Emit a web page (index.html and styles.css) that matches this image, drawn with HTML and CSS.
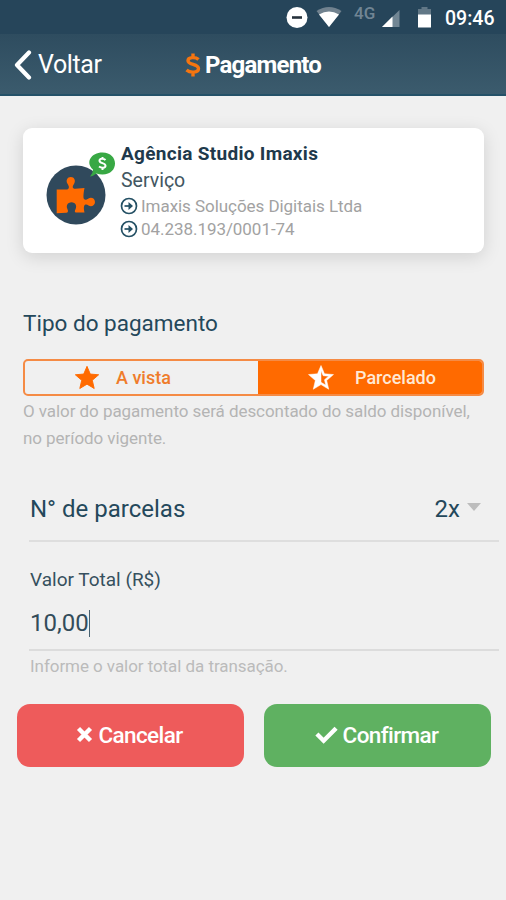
FILE: index.html
```html
<!DOCTYPE html>
<html lang="pt-BR">
<head>
<meta charset="utf-8">
<title>Pagamento</title>
<link rel="stylesheet" href="styles.css">
</head>
<body>
<header class="top">
  <div class="status">
    <svg class="status-icons" width="150" height="34" viewBox="0 0 150 34">
      <circle cx="12" cy="17.500" r="10.500" fill="#fff"/>
      <path d="M7 17.500h10" stroke="#26323c" stroke-width="2.600"/>
      <path d="M31.500 11Q44 3 56.500 11L44 27z" fill="#71828f"/>
      <path d="M34 14.500Q44 8.500 54 14.500L44 27z" fill="#fff"/>
      <path d="M114.500 10v17H97z" fill="#718694"/>
      <path d="M107.500 16.500V27H97z" fill="#fff"/>
      <path d="M133 9h3.500V7h6v2h3.500v6h-13z" fill="#617786"/>
      <path d="M133 14.500h13v13h-13z" fill="#fff"/>
    </svg>
    <span class="network">4G</span>
    <span class="clock">09:46</span>
  </div>
  <nav class="bar">
    <a class="back"><svg width="18" height="30" viewBox="0 0 18 30"><path d="M15 2.500L3 15l12 12.500" fill="none" stroke="#fff" stroke-width="4.200" stroke-linecap="round" stroke-linejoin="round"/></svg><span class="t-back">Voltar</span></a>
    <h1 class="title"><svg width="16" height="26" viewBox="0 0 16 26"><path d="M13.500 7.500C11 5 3 4.500 3 8.800c0 4.400 10.500 3 10.500 7.800 0 4.500-8.500 4.400-12 1.400M8 1.500v4M8 20v4.500" fill="none" stroke="#f57510" stroke-width="3.400"/></svg><span class="t-title">Pagamento</span></h1>
  </nav>
</header>
<main>
  <section class="card">
    <svg class="avatar" width="76" height="76" viewBox="0 0 76 76">
      <circle cx="32" cy="46" r="29.500" fill="#30495c"/>
      <path d="M12.700 40.500H22c4 0 3.200-3.500 1.500-5.800-2-3.200-.2-6.700 3.300-6.700s5.200 3.500 3.300 6.700c-1.700 2.300-2.200 5.100 1.200 5.100l9.200-.8c-.8 4-1.600 9.500-.5 11 1.200 1.500 3 .5 4.500-.5 2.600-1.700 6.500-.2 6.500 3.500s-3.900 5.300-6.500 3.500c-1.500-1.200-3.500-1.500-4.300.3-.7 1.600-.2 4.500.3 6.700h-8.500c-1.500 0-1.500-1.500-.4-3.500 1.500-3 0-6.700-4.100-6.700s-5.600 3.700-4.100 6.700c1 2 .8 3.700-1.200 3.800l-9.500.4z" fill="#ff6a00"/>
      <path d="M46 27.500q3-3 3-7c-8-7-2-17 9.500-17 16.500 0 17 22 0 22q-3.500 0-6-1-3 2.500-6.500 3z" fill="#38a844"/>
      <path d="M61.500 11c-2-2-6-1.500-6 .7 0 2.800 6 2 6 5 0 2.500-4 2.600-6.500.8M58.500 8v2M58.500 18.500V21" fill="none" stroke="#fff" stroke-width="2"/>
    </svg>
    <div class="info">
      <div class="name"><span>Agência Studio Imaxis</span></div>
      <div class="kind"><span>Serviço</span></div>
      <div class="detail"><svg width="18" height="18" viewBox="0 0 18 18"><circle cx="9" cy="9" r="7.500"/><path d="M4.500 9H10.500"/><path class="head" d="M8.500 5L13 9l-4.500 4z"/></svg><span class="t-company">Imaxis Soluções Digitais Ltda</span></div>
      <div class="detail"><svg width="18" height="18" viewBox="0 0 18 18"><circle cx="9" cy="9" r="7.500"/><path d="M4.500 9H10.500"/><path class="head" d="M8.500 5L13 9l-4.500 4z"/></svg><span class="t-doc">04.238.193/0001-74</span></div>
    </div>
  </section>

  <h2 class="section-title"><span>Tipo do pagamento</span></h2>
  <div class="segment">
    <button class="option cash"><svg width="28" height="28" viewBox="0 0 24 24"><path d="M12 17.270L18.180 21l-1.640-7.030L22 9.240l-7.190-.61L12 2 9.190 8.630 2 9.240l5.460 4.730L5.820 21z" fill="#ff6a00" stroke="#ff6a00" stroke-width=".8"/></svg><span>A vista</span></button>
    <button class="option parts"><svg width="30" height="30" viewBox="0 0 24 24"><path d="M22 9.240l-7.190-.62L12 2 9.190 8.630 2 9.240l5.460 4.730L5.820 21 12 17.270 18.180 21l-1.630-7.030zM12 15.400V6.100l1.710 4.040 4.380.38-3.320 2.880 1 4.280z" fill="#fff" stroke="#fff" stroke-width=".4"/></svg><span>Parcelado</span></button>
  </div>
  <p class="note"><span class="n1">O valor do pagamento será descontado do saldo disponível,</span><br><span class="n2">no período vigente.</span></p>

  <div class="row"><span class="t-label">N° de parcelas</span><span class="value"><span class="t-2x">2x</span><i class="caret"></i></span></div>
  <label class="field">
    <span class="field-label"><span>Valor Total (R$)</span></span>
    <span class="input"><span>10,00</span><i class="cursor"></i></span>
  </label>
  <p class="hint"><span>Informe o valor total da transação.</span></p>

  <div class="actions">
    <button class="btn cancel"><svg width="17" height="17" viewBox="0 0 17 17"><path d="M2.500 2.500l12 12M14.500 2.500l-12 12" stroke="#fff" stroke-width="4.400"/></svg><span>Cancelar</span></button>
    <button class="btn confirm"><svg width="23" height="19" viewBox="0 0 24 19"><path d="M2 9l7 7L22 3" fill="none" stroke="#fff" stroke-width="4.600"/></svg><span>Confirmar</span></button>
  </div>
</main>
</body>
</html>
```
FILE: styles.css
```css
* { box-sizing: border-box; margin: 0; padding: 0; }
body { width: 506px; height: 900px; overflow: hidden; background: #f0f0f0; font-family: Roboto, sans-serif; color: #24485b; }
span { white-space: nowrap; }
svg { flex: none; display: block; }
button { border: 0; font: inherit; background: none; }
.top { height: 96px; background: linear-gradient(#2e4c5f 35%, #3b5b6d 100%); border-bottom: 2px solid #245168; color: #fff; }
.status { height: 34px; display: flex; justify-content: flex-end; background: #26455a; position: relative; }
.status-icons { margin-right: 10px; }
.network { position: absolute; left: 354px; top: 3px; font-size: 17px; line-height: 20px; font-weight: 500; color: #718594; }
.clock { width: 61px; font-size: 19.500px; line-height: 37px; font-weight: 500; }
.bar { height: 60px; display: flex; align-items: center; padding: 2px 0 0 14px; }
.back { display: flex; align-items: center; gap: 6px; width: 171px; font-size: 25px; line-height: 60px; letter-spacing: -.4px; }
.title { display: flex; align-items: center; gap: 4px; font-size: 24px; line-height: 60px; font-weight: 700; }
.t-title { letter-spacing: -.8px; }
main { display: flex; flex-direction: column; }
.card { width: 461px; height: 125px; margin: 32px 0 0 23px; background: #fff; border-radius: 9px; box-shadow: 0 4px 18px rgba(0,0,0,.13); display: flex; padding: 13px 0 0 21px; }
.avatar { margin-top: 8px; }
.info { display: flex; flex-direction: column; padding-left: 1px; }
.name { font-size: 19px; line-height: 25px; font-weight: 700; letter-spacing: .3px; color: #20394b; }
.kind { font-size: 19.500px; line-height: 29px; color: #425661; }
.detail { display: flex; align-items: center; gap: 3px; font-size: 17px; line-height: 22.500px; height: 22.500px; color: #a2a2a2; letter-spacing: -.05px; }
.detail svg { fill: none; stroke: #245064; stroke-width: 1.700; margin-left: -1px; }
.detail .head { fill: #245064; stroke: none; }
.section-title { margin: 53px 0 0 23px; font-size: 22.500px; line-height: 34px; font-weight: 400; }
.segment { display: flex; width: 461px; height: 37px; margin: 19px 0 0 23px; border: 2px solid #f58b45; border-radius: 5px; background: #f0f0f0; overflow: hidden; }
.option { display: flex; align-items: center; font-size: 18px; font-weight: 500; color: #ef7c2b; }
.cash { width: 233px; padding-left: 48px; gap: 15px; }
.parts { flex: 1; background: #ff6a00; color: #ffe9d5; padding-left: 48px; gap: 19px; margin: -2px -2px -2px 0; }
.note { margin: 2px 0 0 23px; font-size: 17px; line-height: 26.500px; color: #b4b4b4; letter-spacing: -.06px; }
.row { display: flex; justify-content: space-between; width: 470px; height: 66px; margin: 25px 0 0 29px; padding: 0 18px 0 1px; border-bottom: 2px solid #dedede; font-size: 24px; line-height: 67px; }
.value { display: flex; align-items: center; gap: 7px; padding-top: 2px; }
.caret { border: 7px solid transparent; border-top: 8px solid #bdbdbd; border-bottom: 0; margin-top: -4px; }
.field { display: flex; flex-direction: column; width: 470px; height: 109px; margin-left: 29px; padding: 24px 0 0 1px; border-bottom: 2px solid #dcdcdc; }
.field-label { font-size: 19px; line-height: 28px; color: #36505e; }
.input { display: flex; align-items: center; font-size: 24px; line-height: 36px; margin-top: 11px; color: #334c5a; }
.cursor { width: 1px; height: 27px; background: #466171; }
.hint { margin: 1px 0 0 30px; font-size: 17px; line-height: 28px; color: #bbb; letter-spacing: -.06px; }
.actions { display: flex; gap: 20px; margin: 24px 0 0 17px; }
.btn { width: 227px; height: 63px; border-radius: 13px; display: flex; align-items: center; justify-content: center; padding: 0 2px 2px 0; color: #fff; font-size: 22.500px; font-weight: 500; letter-spacing: -.6px; }
.cancel { background: #ee5b5b; gap: 5px; }
.confirm { background: #5fb161; gap: 5px; }
```
